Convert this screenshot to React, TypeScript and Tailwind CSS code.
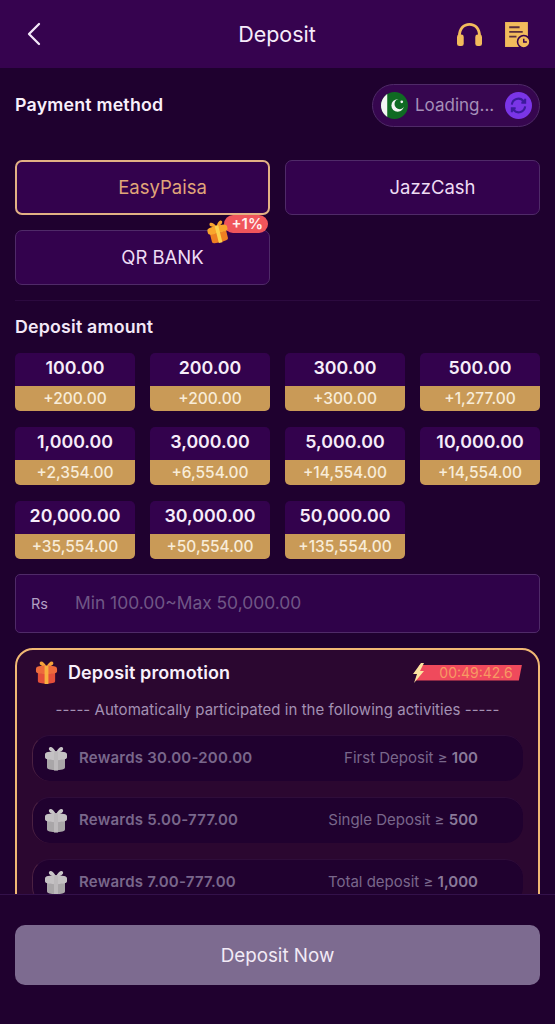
import React from 'react';

const amounts = [
  ['100.00', '+200.00'],
  ['200.00', '+200.00'],
  ['300.00', '+300.00'],
  ['500.00', '+1,277.00'],
  ['1,000.00', '+2,354.00'],
  ['3,000.00', '+6,554.00'],
  ['5,000.00', '+14,554.00'],
  ['10,000.00', '+14,554.00'],
  ['20,000.00', '+35,554.00'],
  ['30,000.00', '+50,554.00'],
  ['50,000.00', '+135,554.00'],
];

const rewards = [
  ['Rewards 30.00-200.00', 'First Deposit', '100'],
  ['Rewards 5.00-777.00', 'Single Deposit', '500'],
  ['Rewards 7.00-777.00', 'Total deposit', '1,000'],
];

const palette = {
  red: { bow: '#f5a33a', lid: '#ee6a3c', body: '#e4503a', band: '#f9b03f' },
  orange: { bow: '#f7a52f', lid: '#f9a52c', body: '#ee7f22', band: '#fbd24e' },
  grey: { bow: '#c9c6c8', lid: '#c4c1c3', body: '#a9a6a8', band: '#bcb9bb' },
};

const Gift = ({ tone = 'red', className = '' }: { tone?: 'red' | 'orange' | 'grey'; className?: string }) => {
  const c = palette[tone];
  return (
    <svg viewBox="0 0 24 26" className={className}>
      <path d="M12 7C10 2 6 0 5 2.500 4 5 8 7 12 7zM12 7c2-5 6-7 7-4.500C20 5 16 7 12 7z" fill={c.bow} />
      <path d="M3 13q9 2.500 18 0v9q0 1.500-2.500 2-6.500 1.500-13 0Q3 23.500 3 22z" fill={c.body} />
      <path d="M4 6.500q8-1.500 16 0 3 .5 3 2.500v3q0 1.500-3 2-8 1.500-16 0-3-.5-3-2V9q0-2 3-2.500z" fill={c.lid} />
      <path d="M10 6h4v19h-4z" fill={c.band} />
    </svg>
  );
};

const Reward = ({ title, label, value }: { title: string; label: string; value: string }) => (
  <div className="h-[46px] shrink-0 flex items-center rounded-[18px] bg-[#20012f] border-l border-t border-l-[#4b2142] border-t-[#2f0d3a] pl-[11px] pr-[45px]">
    <Gift tone="grey" className="w-[24px] h-[27px] shrink-0" />
    <span className="ml-[11px] text-[15px] tracking-[0.22px] font-semibold text-[#79678b]">{title}</span>
    <span className="ml-auto text-[15px] text-[#79678b]">
      {label} ≥ <span className="font-semibold text-[#8a7a9a]">{value}</span>
    </span>
  </div>
);

export default function App() {
  return (
    <div className="w-[555px] h-[1024px] flex flex-col overflow-hidden bg-[#1f012f] text-white font-['Inter',sans-serif]">
      {/* Header */}
      <header className="h-[68px] shrink-0 flex items-center bg-[#36034f] pl-[26px] pr-[25px]">
        <svg viewBox="0 0 16 24" className="w-[16px] h-[24px] shrink-0" fill="none" stroke="#f3e6f8" strokeWidth="2.300" strokeLinecap="round" strokeLinejoin="round">
          <path d="M13 2L3 12l10 10" />
        </svg>
        <h1 className="flex-1 text-center text-[21.500px] text-[#f6ebfa] pl-[56px] pt-[1px]">Deposit</h1>
        <svg viewBox="0 0 28 26" className="w-[27px] h-[25px] shrink-0" fill="#f2bb5c">
          <path d="M2 15C2 6 7 1 14 1s12 5 12 14h-3C23 8 19.500 4 14 4S5 8 5 15z" />
          <rect x="1" y="13" width="7" height="12" rx="2.500" />
          <rect x="20" y="13" width="7" height="12" rx="2.500" />
        </svg>
        <svg viewBox="0 0 25 26" className="w-[26px] h-[27px] shrink-0 ml-[21px]">
          <path d="M1 1h22v24H1z" fill="#f2bb5c" />
          <path d="M5 6h10M5 10.500h13M5 15h7" stroke="#5a2d3c" strokeWidth="1.800" />
          <circle cx="19" cy="20" r="6" fill="#f2bb5c" stroke="#36034f" strokeWidth="1.500" />
          <path d="M19 17v3.200h3" fill="none" stroke="#36034f" strokeWidth="1.400" />
        </svg>
      </header>

      {/* Scroll area */}
      <main className="flex-1 min-h-0 overflow-hidden px-[15px]">
        <div className="flex items-center justify-between h-[44px] mt-[15px]">
          <h2 className="text-[17.800px] tracking-[0.2px] font-semibold text-[#f8f0fb]">Payment method</h2>
          <div className="w-[168px] h-[43px] flex items-center rounded-full bg-[#36064f] border border-[#4f2a68] pl-[8px] pr-[7px]">
            <svg viewBox="0 0 26 26" className="w-[27px] h-[27px] shrink-0">
              <clipPath id="flag"><circle cx="13" cy="13" r="13" /></clipPath>
              <g clipPath="url(#flag)">
                <rect width="26" height="26" fill="#0f6a23" />
                <rect width="6" height="26" fill="#f4f4f4" />
                <circle cx="16" cy="13" r="6" fill="#f4f4f4" />
                <circle cx="18" cy="11.500" r="5" fill="#0f6a23" />
                <circle cx="20" cy="9.500" r="1.300" fill="#f4f4f4" />
              </g>
            </svg>
            <span className="ml-[7px] pt-[1px] text-[17px] text-[#a58fb8]">Loading...</span>
            <div className="ml-auto w-[27px] h-[27px] rounded-full bg-[#7a35e6] flex items-center justify-center">
              <svg viewBox="0 0 20 20" className="w-[19px] h-[19px]" fill="none" stroke="#3c1a9c" strokeWidth="2.200">
                <path d="M3 9a7 7 0 0 1 12-4l2 2M17 3v4h-4M17 11a7 7 0 0 1-12 4l-2-2M3 17v-4h4" />
              </svg>
            </div>
          </div>
        </div>

        <div className="grid grid-cols-2 gap-[15px] mt-[33px]">
          <button className="h-[55px] pl-[40px] rounded-[7px] bg-[#33024d] border-2 border-[#e2b184] text-[18.500px] text-[#e0a679]">EasyPaisa</button>
          <button className="h-[55px] pl-[40px] rounded-[7px] bg-[#33024d] border border-[#4f2a68] text-[18.500px] text-[#eedcf4]">JazzCash</button>
          <button className="relative h-[55px] pl-[40px] rounded-[7px] bg-[#33024d] border border-[#4f2a68] text-[18.500px] text-[#eedcf4]">
            QR BANK
            <span className="absolute right-[1px] top-[-16px] h-[18px] pl-[7px] pr-[5px] rounded-full bg-[#f0555b] text-[15px] leading-[18px] font-semibold text-[#fff0ee]">+1%</span>
            <Gift tone="orange" className="absolute left-[191px] top-[-11px] w-[22px] h-[24px] -rotate-[14deg]" />
          </button>
        </div>

        <div className="h-px bg-[#2c0a3f] mt-[15px]" />

        <h2 className="mt-[16px] text-[17.800px] tracking-[0.2px] leading-[20px] font-semibold text-[#f3e8f7]">Deposit amount</h2>

        <div className="grid grid-cols-4 gap-x-[15px] gap-y-[16px] mt-[16px]">
          {amounts.map(([amount, bonus]) => (
            <div key={amount} className="h-[58px] flex flex-col rounded-[5px] overflow-hidden">
              <div className="h-[33px] flex items-center justify-center bg-[#33024d] text-[17.800px] font-semibold text-[#f6ecf9] pb-[2px]">{amount}</div>
              <div className="flex-1 flex items-center justify-center bg-[#c99a57] text-[15.500px] font-medium text-[#f8ecd8]">{bonus}</div>
            </div>
          ))}
        </div>

        <div className="mt-[15px] h-[59px] flex items-center rounded-[5px] bg-[#2f0249] border border-[#4f2a68] px-[15px]">
          <span className="text-[14.500px] text-[#b39fc3]">Rs</span>
          <span className="ml-[27px] text-[17.400px] text-[#6f5786]">Min 100.00~Max 50,000.00</span>
        </div>

        <section className="mt-[15px] h-[340px] rounded-[18px] border-2 border-[#f0b874] bg-[#2b0730] px-[15px]">
          <div className="flex items-center h-[45px]">
            <Gift className="w-[23px] h-[25px] ml-[3px] shrink-0" />
            <h3 className="ml-[10px] text-[18px] tracking-[0.1px] font-semibold text-[#f8f0fb]">Deposit promotion</h3>
            <div className="ml-auto mr-[1px] flex items-center">
              <svg viewBox="0 0 14 20" className="w-[14px] h-[20px] -mr-[12px] z-10 -translate-x-[2px]">
                <path d="M9 0L1 11h4l-3 9 10-12H8l4-8z" fill="#fbe3a0" />
              </svg>
              <div className="w-[106px] h-[16px] pl-[14px] bg-[#ef4a5c] [clip-path:polygon(3%_0,100%_0,97%_100%,0_100%)] flex items-center justify-center">
                <span className="text-[14px] leading-none text-[#f79a63]">00:49:42.6</span>
              </div>
            </div>
          </div>
          <p className="text-center text-[15px] tracking-[0.04px] leading-[18px] mt-[6px] -mx-[10px] text-[#a391b3] whitespace-nowrap">----- Automatically participated in the following activities -----</p>
          <div className="flex flex-col gap-[16px] mt-[16px]">
            {rewards.map(([title, label, value]) => (
              <Reward key={title} title={title} label={label} value={value} />
            ))}
          </div>
        </section>
      </main>

      {/* Footer */}
      <footer className="h-[130px] shrink-0 bg-[#20012f] border-t border-[#33114a] px-[15px] pt-[30px]">
        <button className="w-full h-[60px] pt-[2px] rounded-[10px] bg-[#7d6b90] text-[18.800px] text-[#f2eaf6]">Deposit Now</button>
      </footer>
    </div>
  );
}
